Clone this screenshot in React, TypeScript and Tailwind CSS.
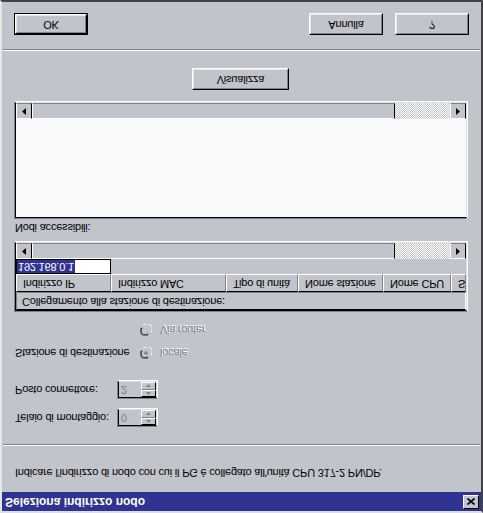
import React from "react";

// The dialog is shown mirrored top-to-bottom, so the rows are laid out in the
// order they appear on screen and every label is flipped on its own.
const Flip = ({ children, className = "" }: { children: React.ReactNode; className?: string }) => (
  <span className={`inline-block -scale-y-100 whitespace-nowrap ${className}`}>{children}</span>
);

const Button = ({ label, width, isDefault = false }: { label: string; width: string; isDefault?: boolean }) => (
  <div className={`${width} h-[22px] ${isDefault ? "border border-black" : ""}`}>
    <div className="h-full border border-t-white border-l-white border-r-black border-b-black">
      <div className="h-full flex items-center justify-center border border-t-[#e4e6ea] border-l-[#e4e6ea] border-r-[#80838a] border-b-[#80838a]">
        <Flip className="leading-[13px]">{label}</Flip>
      </div>
    </div>
  </div>
);

const Arrow = ({ dir }: { dir: "left" | "right" }) => (
  <div className="w-4 h-full flex items-center justify-center bg-[#c1c4cb] border border-t-[#80838a] border-l-white border-r-black border-b-white">
    <svg width="4" height="7" viewBox="0 0 4 7">
      {dir === "left" ? <path d="M4 0 L0 3.5 L4 7 Z" fill="#000" /> : <path d="M0 0 L4 3.5 L0 7 Z" fill="#000" />}
    </svg>
  </div>
);

const ScrollBar = () => (
  <div className="h-4 flex shrink-0">
    <Arrow dir="left" />
    <div className="flex-1 bg-[#c1c4cb] border border-t-[#80838a] border-l-white border-r-black border-b-white" />
    <div className="w-[55px] bg-[repeating-conic-gradient(#c1c4cb_0_25%,#ffffff_0_50%)] bg-[length:2px_2px]" />
    <Arrow dir="right" />
  </div>
);

const Sunken = ({ className = "", inner = "", children }: { className?: string; inner?: string; children?: React.ReactNode }) => (
  <div className={`border border-t-white border-l-[#80838a] border-r-white border-b-[#80838a] ${className}`}>
    <div className={`h-full border border-t-[#dcdee2] border-l-black border-r-[#dcdee2] border-b-black ${inner}`}>{children}</div>
  </div>
);

const Spin = ({ value }: { value: string }) => (
  <Sunken className="w-[41px] h-[19px]" inner="flex bg-[#c1c4cb]">
    <div className="flex-1 pl-[2px] text-[#80838a] flex items-center">
      <Flip className="leading-[13px]">{value}</Flip>
    </div>
    <div className="w-[15px] flex flex-col">
      <div className="flex-1 flex items-center justify-center border border-t-white border-l-white border-r-black border-b-[#80838a]">
        <svg width="5" height="3" viewBox="0 0 5 3">
          <path d="M2.5 0 L5 3 L0 3 Z" fill="#80838a" />
        </svg>
      </div>
      <div className="flex-1 flex items-center justify-center border border-t-white border-l-white border-r-black border-b-black">
        <svg width="5" height="3" viewBox="0 0 5 3">
          <path d="M0 0 L5 0 L2.5 3 Z" fill="#80838a" />
        </svg>
      </div>
    </div>
  </Sunken>
);

const Radio = ({ checked }: { checked?: boolean }) => (
  <svg width="12" height="12" viewBox="0 0 12 12">
    <circle cx="6" cy="6" r="5.5" fill="#c1c4cb" />
    <path d="M1.2 3.5 A5 5 0 0 0 8.5 10.8" stroke="#80838a" strokeWidth="1" fill="none" />
    <path d="M2.2 3.8 A4 4 0 0 0 8 9.8" stroke="#000" strokeWidth="1" fill="none" />
    <path d="M3.5 1.2 A5 5 0 0 1 10.8 8.5" stroke="#ffffff" strokeWidth="1" fill="none" />
    {checked && <circle cx="6" cy="6" r="1.8" fill="#80838a" />}
  </svg>
);

const disabledText = "text-[#80838a] [text-shadow:1px_1px_0_#ffffff]";

const headers = [
  { label: "Indirizzo IP", width: "w-[95px]" },
  { label: "Indirizzo MAC", width: "w-[115px]" },
  { label: "Tipo di unità", width: "w-[72px]" },
  { label: "Nome stazione", width: "w-[85px]" },
  { label: "Nome CPU", width: "w-[68px]" },
  { label: "Slot", width: "flex-1" },
];

export default function App() {
  return (
    <div className="w-[483px] h-[513px] bg-[#c1c4cb] font-['Liberation_Sans',Arial,sans-serif] text-[11px] tracking-[-0.2px] text-black border-2 border-t-[#404247] border-l-[#e4e6ea] border-r-[#404247] border-b-[#dcdee2] flex flex-col overflow-hidden">
      {/* Buttons */}
      <div className="mt-[11px] flex px-[12px]">
        <Button label="OK" width="w-[74px]" isDefault />
        <div className="ml-auto flex gap-[12px]">
          <Button label="Annulla" width="w-[74px]" />
          <Button label="?" width="w-[74px]" />
        </div>
      </div>

      <div className="mt-[14px] mx-[1px] border-t border-t-[#80838a] border-b border-b-white" />

      <div className="mt-[17px] ml-[190px]">
        <Button label="Visualizza" width="w-[97px]" />
      </div>

      {/* Nodi accessibili list */}
      <Sunken className="mt-[11px] ml-[12px] w-[454px] h-[118px]" inner="flex flex-col bg-[#f8f9fa]">
        <ScrollBar />
      </Sunken>
      <div className="mt-[2px] ml-[13px] h-[13px] leading-[13px]">
        <Flip>Nodi accessibili:</Flip>
      </div>

      {/* Collegamento alla stazione di destinazione */}
      <Sunken className="mt-[7px] ml-[12px] w-[454px] h-[71px]" inner="flex flex-col bg-[#c1c4cb]">
        <ScrollBar />
        <div className="h-[15px] flex">
          <div className="w-[95px] h-[15px] flex bg-white border border-black">
            <div className="bg-[#2f3394] text-white leading-[13px] px-[1px]">
              <Flip>192.168.0.1</Flip>
            </div>
          </div>
        </div>
        <div className="h-[18px] flex">
          {headers.map((h) => (
            <div
              key={h.label}
              className={`${h.width} overflow-hidden flex items-center pl-[6px] border border-t-white border-l-white border-r-[#80838a] border-b-black`}
            >
              <Flip className="leading-[13px]">{h.label}</Flip>
            </div>
          ))}
        </div>
        <div className="flex-1 flex items-center pl-[5px] border border-t-[#80838a] border-l-[#80838a] border-r-white border-b-black">
          <Flip className="leading-[13px]">Collegamento alla stazione di destinazione:</Flip>
        </div>
      </Sunken>

      {/* Stazione di destinazione */}
      <div className="mt-[11px] ml-[138px] h-[13px] flex items-center gap-[8px]">
        <Radio />
        <Flip className={`leading-[13px] ${disabledText}`}>Via router</Flip>
      </div>
      <div className="mt-[10px] ml-[13px] h-[13px] flex items-center">
        <div className="w-[125px] leading-[13px]">
          <Flip>Stazione di destinazione</Flip>
        </div>
        <div className="flex items-center gap-[8px]">
          <Radio checked />
          <Flip className={`leading-[13px] ${disabledText}`}>locale</Flip>
        </div>
      </div>

      {/* Spin fields */}
      <div className="mt-[21px] ml-[13px] flex items-center">
        <div className="w-[102px] leading-[13px]">
          <Flip>Posto connettore:</Flip>
        </div>
        <Spin value="2" />
      </div>
      <div className="mt-[9px] ml-[13px] flex items-center">
        <div className="w-[102px] leading-[13px]">
          <Flip>Telaio di montaggio:</Flip>
        </div>
        <Spin value="0" />
      </div>

      <div className="mt-[17px] mx-[1px] border-t border-t-[#80838a] border-b border-b-white" />

      <div className="mt-[20px] ml-[13px] h-[13px] leading-[13px]">
        <Flip>Indicare l'indirizzo di nodo con cui il PG è collegato all'unità CPU 317-2 PN/DP.</Flip>
      </div>

      {/* Title bar */}
      <div className="mt-auto h-[19px] bg-[#2f3394] flex items-center pl-[3px] pr-[2px]">
        <Flip className="text-white font-bold text-[12px] tracking-normal leading-[15px]">Seleziona indirizzo nodo</Flip>
        <div className="ml-auto w-[16px] h-[14px] bg-[#c1c4cb] flex items-center justify-center border border-t-white border-l-white border-r-black border-b-black">
          <svg width="8" height="7" viewBox="0 0 8 7">
            <path d="M0.5 0.5 L7.5 6.5 M7.5 0.5 L0.5 6.5" stroke="#000" strokeWidth="1.6" />
          </svg>
        </div>
      </div>
    </div>
  );
}
